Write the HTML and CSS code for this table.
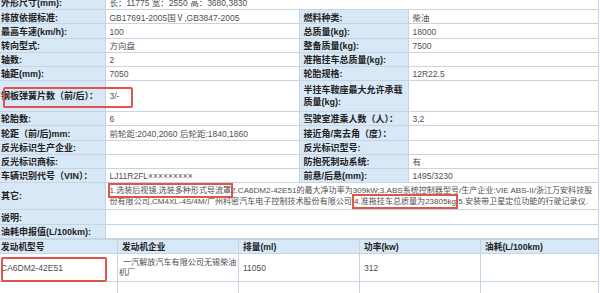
FILE: index.html
```html
<!DOCTYPE html>
<html lang="zh-CN">
<head>
<meta charset="utf-8">
<title>车辆参数</title>
<link rel="stylesheet" href="styles.css">
</head>
<body>
<table class="spec">
  <colgroup>
    <col class="c-l1"><col class="c-v1"><col class="c-l2"><col class="c-v2">
  </colgroup>
  <tr><td class="lab">外形尺寸(mm):</td><td colspan="3">长：11775 宽：2550 高：3680,3830</td></tr>
  <tr><td class="lab">排放依据标准:</td><td>GB17691-2005国Ⅴ,GB3847-2005</td><td class="lab">燃料种类:</td><td>柴油</td></tr>
  <tr><td class="lab">最高车速(km/h):</td><td>100</td><td class="lab">总质量(kg):</td><td>18000</td></tr>
  <tr><td class="lab">转向型式:</td><td>方向盘</td><td class="lab">整备质量(kg):</td><td>7500</td></tr>
  <tr><td class="lab">轴数:</td><td>2</td><td class="lab">准拖挂车总质量(kg):</td><td></td></tr>
  <tr><td class="lab">轴距(mm):</td><td>7050</td><td class="lab">轮胎规格:</td><td>12R22.5</td></tr>
  <tr class="tall"><td class="lab mark-spring">钢板弹簧片数（前/后）：</td><td>3/-</td><td class="lab">半挂车鞍座最大允许承载<br>质量(kg):</td><td></td></tr>
  <tr><td class="lab">轮胎数:</td><td>6</td><td class="lab">驾驶室准乘人数（人）：</td><td>3,2</td></tr>
  <tr><td class="lab">轮距（前/后)mm:</td><td>前轮距:2040,2060 后轮距:1840,1860</td><td class="lab">接近角/离去角（度）：</td><td></td></tr>
  <tr><td class="lab">反光标识生产企业:</td><td></td><td class="lab">反光标识型号:</td><td></td></tr>
  <tr><td class="lab">反光标识商标:</td><td></td><td class="lab">防抱死制动系统:</td><td>有</td></tr>
  <tr><td class="lab">车辆识别代号（VIN）：</td><td>LJ11R2FL×××××××××</td><td class="lab">前悬/后悬(mm):</td><td>1495/3230</td></tr>
  <tr class="other"><td class="lab">其它:</td><td colspan="3" class="wrap"><span class="mark">1.选装后视镜,选装多种形式导流罩</span>2.CA6DM2-42E51的最大净功率为309kW;3.ABS系统控制器型号/生产企业:VIE ABS-II/浙江万安科技股份有限公司,CM4XL-4S/4M/广州科密汽车电子控制技术股份有限公司 <span class="mark">4.准拖挂车总质量为23805kg</span>;5.安装带卫星定位功能的行驶记录仪.</td></tr>
  <tr><td class="lab">说明:</td><td colspan="3"></td></tr>
  <tr><td class="lab">油耗申报值(L/100km):</td><td colspan="3"></td></tr>
</table>
<table class="engine">
  <colgroup>
    <col class="e1"><col class="e2"><col class="e3"><col class="e4"><col class="e5">
  </colgroup>
  <tr><th>发动机型号</th><th>发动机企业</th><th>排量(ml)</th><th>功率(kw)</th><th>油耗(L/100km)</th></tr>
  <tr class="data"><td class="mark-model">CA6DM2-42E51</td><td class="maker">一汽解放汽车有限公司无锡柴油机厂</td><td>11050</td><td>312</td><td></td></tr>
  <tr><td></td><td></td><td></td><td></td><td></td></tr>
</table>
</body>
</html>
```
FILE: styles.css
```css
html, body {
  margin: 0;
  padding: 0;
  background: #ffffff;
  overflow: hidden;
}
body {
  font-family: "Liberation Sans", "Noto Sans CJK SC", sans-serif;
  font-size: 8.5px;
  color: #505050;
}
table {
  border-collapse: collapse;
  table-layout: fixed;
  width: 602px;
  margin-left: -4px;
}
.spec {
  margin-top: -5px;
}
.c-l1 { width: 108.5px; }
.c-v1 { width: 194px; }
.c-l2 { width: 109px; }
.c-v2 { width: 190.5px; }
.e1 { width: 121px; }
.e2 { width: 121px; }
.e3 { width: 121px; }
.e4 { width: 121px; }
.e5 { width: 118px; }
td, th {
  border: 1px solid #c6d5e3;
  padding: 1.5px 4px 0 4px;
  height: 11.7px;
  line-height: 10px;
  vertical-align: middle;
  text-align: left;
  white-space: nowrap;
}
.lab {
  background: #d9e8f7;
  color: #222222;
  font-weight: bold;
  font-size: 9px;
}
th {
  background: #d9e8f7;
  color: #222222;
  font-weight: bold;
  font-size: 8.7px;
}
.tall td {
  height: 29px;
  padding: 1px 4px 0 4px;
  line-height: 11.5px;
}
.other td {
  height: 25.8px;
  padding: 0.5px 4px 0 4px;
}
.wrap {
  white-space: normal;
  word-break: break-all;
  font-size: 8.05px;
  line-height: 11.4px;
}
.mark {
  padding: 1px 0;
  outline: 2px solid #df554a;
  outline-offset: 0;
}
.mark-spring, .mark-model {
  position: relative;
}
.mark-spring::after {
  content: "";
  position: absolute;
  left: 6px;
  top: 6px;
  width: 126px;
  height: 17px;
  border: 2px solid #df554a;
  border-radius: 2px;
}
.data td {
  height: 27.3px;
  padding: 0 4px;
  line-height: 10px;
  white-space: normal;
}
.data .maker {
  padding-left: 1px;
  padding-right: 0;
  text-indent: 4px;
  font-size: 8.1px;
}
.mark-model::after {
  content: "";
  position: absolute;
  left: 4px;
  top: 3px;
  width: 102px;
  height: 21px;
  border: 2px solid #df554a;
  border-radius: 2px;
}
```
